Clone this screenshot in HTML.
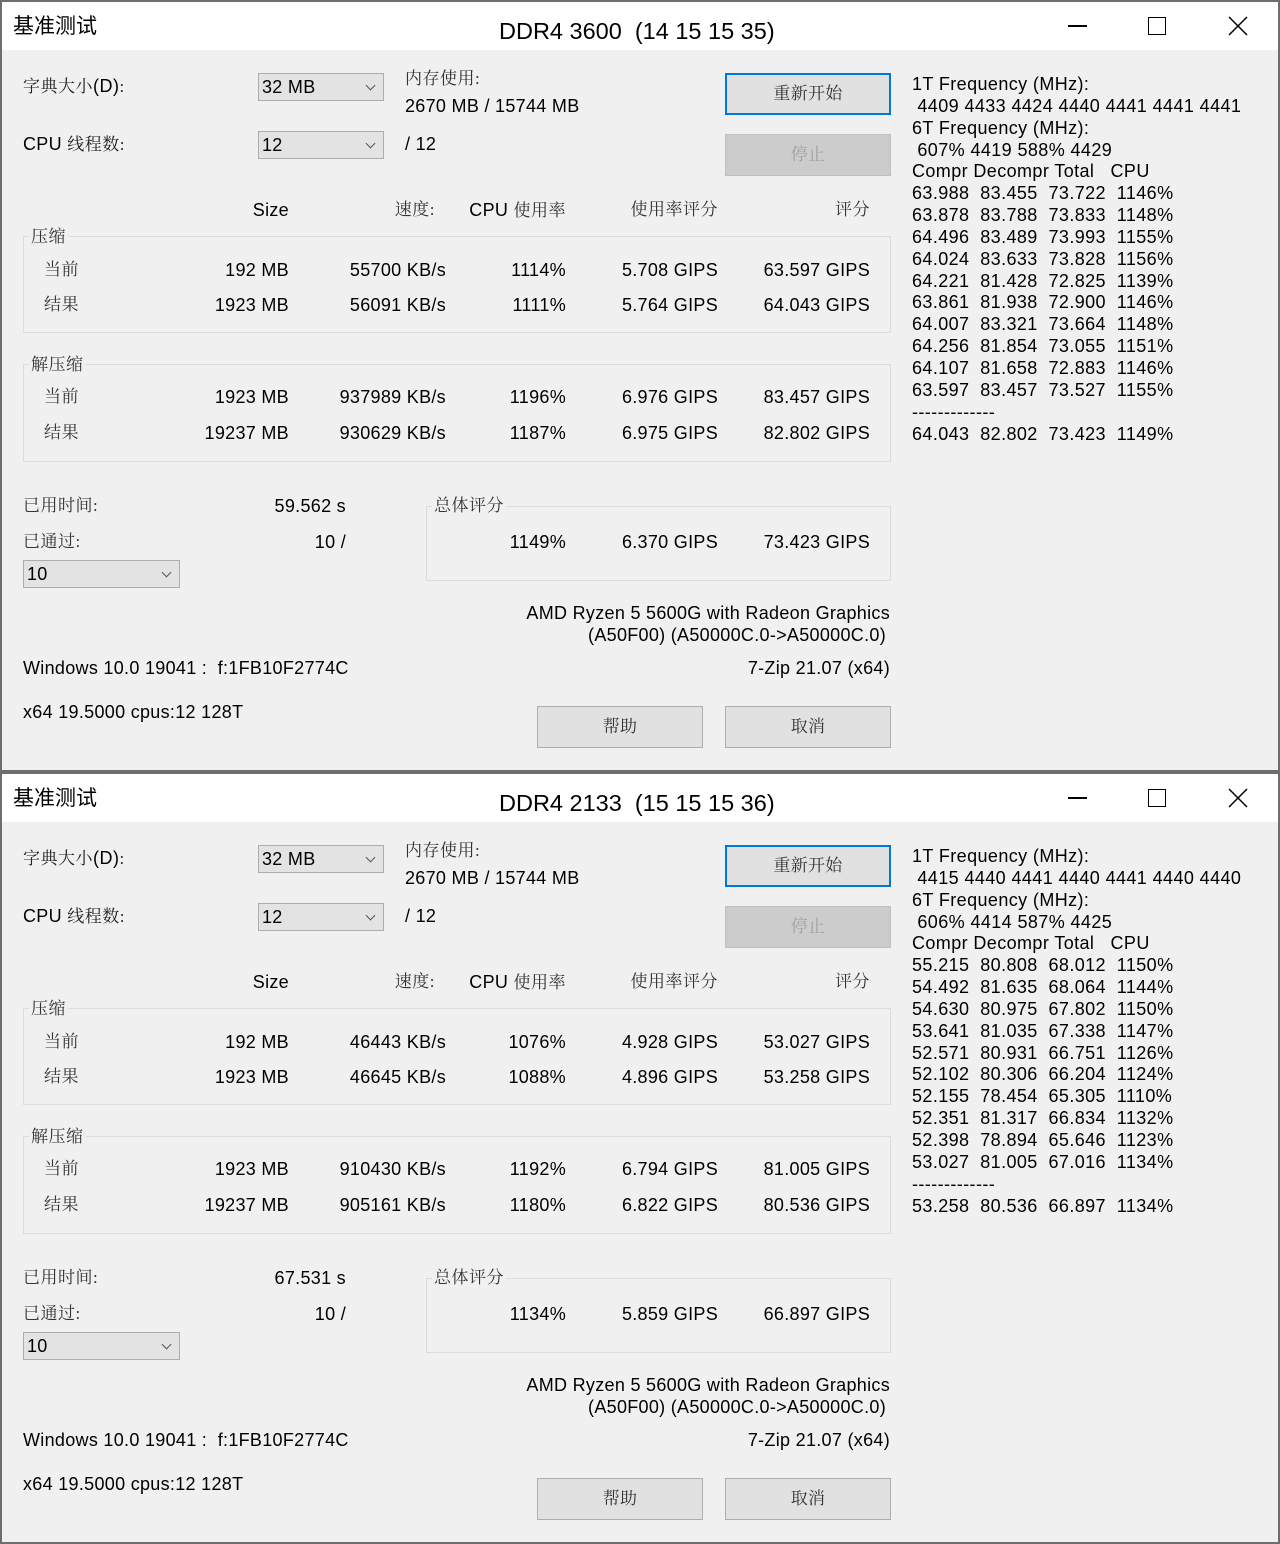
<!DOCTYPE html>
<html><head><meta charset="utf-8"><style>
*{margin:0;padding:0;box-sizing:border-box}
body{width:1280px;height:1544px;background:#f0f0f0;font-family:"Liberation Sans","Noto Sans CJK SC",sans-serif;font-size:18px;color:#000;position:relative;overflow:hidden;letter-spacing:0.3px}
.w{position:absolute;left:0;width:1280px;height:772px;border:2px solid #6e6e6e;background:#f0f0f0}
.tb{position:absolute;left:0;top:0;width:1276px;height:48px;background:#fff}
.t{position:absolute;line-height:22px;white-space:nowrap}
.r{text-align:right}
.cn{font-family:"Liberation Serif","Noto Serif CJK SC",serif;font-size:17px;color:#333;letter-spacing:0.5px}
.cb{position:absolute;height:28px;border:1px solid #adadad;background:#e3e3e3;line-height:26px;padding-left:3px}
.cb i{position:absolute;right:9px;top:8px;width:7px;height:7px;border-right:1.3px solid #555;border-bottom:1.3px solid #555;transform:rotate(45deg)}
.g{position:absolute;border:1px solid #dcdcdc}
.gl{position:absolute;background:#f0f0f0;padding:0 2px;line-height:22px;font-family:"Liberation Serif","Noto Serif CJK SC",serif;font-size:17px;color:#333;letter-spacing:0.5px}
.btn{position:absolute;width:166px;height:42px;border:1px solid #adadad;background:#e1e1e1;text-align:center;line-height:40px;font-family:"Liberation Serif","Noto Serif CJK SC",serif;font-size:17px;color:#333}
.pre{position:absolute;left:910px;top:72px;white-space:pre;line-height:21.85px;letter-spacing:0.4px}
.ttl{position:absolute;left:497px;top:15px;font-size:23.5px;line-height:28px;white-space:nowrap;letter-spacing:0}
.cap{position:absolute;left:11px;top:12px;font-size:21px;line-height:26px;letter-spacing:0}
</style></head><body>

<div class="w" style="top:0">
<div class="tb"></div>
<div class="cap">基准测试</div>
<div class="ttl">DDR4 3600&nbsp; (14 15 15 35)</div>
<div style="position:absolute;left:1066px;top:23px;width:19px;height:1.5px;background:#000"></div>
<div style="position:absolute;left:1146px;top:15px;width:18px;height:18px;border:1.5px solid #000"></div>
<svg style="position:absolute;left:1226px;top:14px" width="20" height="20"><path d="M1 1L19 19M19 1L1 19" stroke="#000" stroke-width="1.5"/></svg>

<div class="t cn" style="left:21px;top:73px;color:#222">字典大小<span style="font-family:'Liberation Sans',sans-serif;font-size:18px;color:#000">(D)</span>:</div>
<div class="cb" style="left:256px;top:71px;width:126px">32 MB<i></i></div>
<div class="t cn" style="left:403px;top:66px">内存使用:</div>
<div class="t" style="left:403px;top:93px">2670 MB / 15744 MB</div>
<div class="t" style="left:21px;top:131px">CPU <span class="cn" style="color:#222">线程数:</span></div>
<div class="cb" style="left:256px;top:129px;width:126px">12<i></i></div>
<div class="t" style="left:403px;top:131px">/ 12</div>
<div class="btn" style="left:723px;top:71px;border:2px solid #0078d7;line-height:38px">重新开始</div>
<div class="btn" style="left:723px;top:132px;background:#cccccc;border-color:#bfbfbf;color:#a0a0a0">停止</div>

<div class="t r" style="right:989px;top:197px">Size</div>
<div class="t r cn" style="right:843px;top:197px">速度:</div>
<div class="t r" style="right:712px;top:197px">CPU <span class="cn">使用率</span></div>
<div class="t r cn" style="right:560px;top:197px">使用率评分</div>
<div class="t r cn" style="right:408px;top:197px">评分</div>

<div class="g" style="left:21px;top:234px;width:868px;height:97px"></div>
<div class="gl" style="left:27px;top:224px">压缩</div>
<div class="t cn" style="left:42px;top:257px">当前</div><div class="t cn" style="left:42px;top:292px">结果</div>
<div class="t r" style="right:989px;top:257px">192 MB</div><div class="t r" style="right:832px;top:257px">55700 KB/s</div><div class="t r" style="right:712px;top:257px">1114%</div><div class="t r" style="right:560px;top:257px">5.708 GIPS</div><div class="t r" style="right:408px;top:257px">63.597 GIPS</div>
<div class="t r" style="right:989px;top:292px">1923 MB</div><div class="t r" style="right:832px;top:292px">56091 KB/s</div><div class="t r" style="right:712px;top:292px">1111%</div><div class="t r" style="right:560px;top:292px">5.764 GIPS</div><div class="t r" style="right:408px;top:292px">64.043 GIPS</div>

<div class="g" style="left:21px;top:362px;width:868px;height:98px"></div>
<div class="gl" style="left:27px;top:352px">解压缩</div>
<div class="t cn" style="left:42px;top:384px">当前</div><div class="t cn" style="left:42px;top:420px">结果</div>
<div class="t r" style="right:989px;top:384px">1923 MB</div><div class="t r" style="right:832px;top:384px">937989 KB/s</div><div class="t r" style="right:712px;top:384px">1196%</div><div class="t r" style="right:560px;top:384px">6.976 GIPS</div><div class="t r" style="right:408px;top:384px">83.457 GIPS</div>
<div class="t r" style="right:989px;top:420px">19237 MB</div><div class="t r" style="right:832px;top:420px">930629 KB/s</div><div class="t r" style="right:712px;top:420px">1187%</div><div class="t r" style="right:560px;top:420px">6.975 GIPS</div><div class="t r" style="right:408px;top:420px">82.802 GIPS</div>

<div class="t cn" style="left:21px;top:493px">已用时间:</div>
<div class="t r" style="right:932px;top:493px">59.562 s</div>
<div class="t cn" style="left:21px;top:529px">已通过:</div>
<div class="t r" style="right:932px;top:529px">10 /</div>
<div class="cb" style="left:21px;top:558px;width:157px">10<i></i></div>

<div class="g" style="left:424px;top:504px;width:465px;height:75px"></div>
<div class="gl" style="left:430px;top:493px">总体评分</div>
<div class="t r" style="right:712px;top:529px">1149%</div><div class="t r" style="right:560px;top:529px">6.370 GIPS</div><div class="t r" style="right:408px;top:529px">73.423 GIPS</div>

<div class="t r" style="right:388px;top:600px">AMD Ryzen 5 5600G with Radeon Graphics</div>
<div class="t r" style="right:392px;top:622px">(A50F00) (A50000C.0-&gt;A50000C.0)</div>
<div class="t r" style="right:388px;top:655px">7-Zip 21.07 (x64)</div>
<div class="t" style="left:21px;top:655px">Windows 10.0 19041 :&nbsp; f:1FB10F2774C</div>
<div class="t" style="left:21px;top:699px">x64 19.5000 cpus:12 128T</div>
<div class="btn" style="left:535px;top:704px">帮助</div>
<div class="btn" style="left:723px;top:704px">取消</div>

<div class="pre">1T Frequency (MHz):
 4409 4433 4424 4440 4441 4441 4441
6T Frequency (MHz):
 607% 4419 588% 4429
Compr Decompr Total   CPU
63.988  83.455  73.722  1146%
63.878  83.788  73.833  1148%
64.496  83.489  73.993  1155%
64.024  83.633  73.828  1156%
64.221  81.428  72.825  1139%
63.861  81.938  72.900  1146%
64.007  83.321  73.664  1148%
64.256  81.854  73.055  1151%
64.107  81.658  72.883  1146%
63.597  83.457  73.527  1155%
-------------
64.043  82.802  73.423  1149%</div>
</div>

<div class="w" style="top:772px;height:772px">
<div class="tb"></div>
<div class="cap">基准测试</div>
<div class="ttl">DDR4 2133&nbsp; (15 15 15 36)</div>
<div style="position:absolute;left:1066px;top:23px;width:19px;height:1.5px;background:#000"></div>
<div style="position:absolute;left:1146px;top:15px;width:18px;height:18px;border:1.5px solid #000"></div>
<svg style="position:absolute;left:1226px;top:14px" width="20" height="20"><path d="M1 1L19 19M19 1L1 19" stroke="#000" stroke-width="1.5"/></svg>

<div class="t cn" style="left:21px;top:73px;color:#222">字典大小<span style="font-family:'Liberation Sans',sans-serif;font-size:18px;color:#000">(D)</span>:</div>
<div class="cb" style="left:256px;top:71px;width:126px">32 MB<i></i></div>
<div class="t cn" style="left:403px;top:66px">内存使用:</div>
<div class="t" style="left:403px;top:93px">2670 MB / 15744 MB</div>
<div class="t" style="left:21px;top:131px">CPU <span class="cn" style="color:#222">线程数:</span></div>
<div class="cb" style="left:256px;top:129px;width:126px">12<i></i></div>
<div class="t" style="left:403px;top:131px">/ 12</div>
<div class="btn" style="left:723px;top:71px;border:2px solid #0078d7;line-height:38px">重新开始</div>
<div class="btn" style="left:723px;top:132px;background:#cccccc;border-color:#bfbfbf;color:#a0a0a0">停止</div>

<div class="t r" style="right:989px;top:197px">Size</div>
<div class="t r cn" style="right:843px;top:197px">速度:</div>
<div class="t r" style="right:712px;top:197px">CPU <span class="cn">使用率</span></div>
<div class="t r cn" style="right:560px;top:197px">使用率评分</div>
<div class="t r cn" style="right:408px;top:197px">评分</div>

<div class="g" style="left:21px;top:234px;width:868px;height:97px"></div>
<div class="gl" style="left:27px;top:224px">压缩</div>
<div class="t cn" style="left:42px;top:257px">当前</div><div class="t cn" style="left:42px;top:292px">结果</div>
<div class="t r" style="right:989px;top:257px">192 MB</div><div class="t r" style="right:832px;top:257px">46443 KB/s</div><div class="t r" style="right:712px;top:257px">1076%</div><div class="t r" style="right:560px;top:257px">4.928 GIPS</div><div class="t r" style="right:408px;top:257px">53.027 GIPS</div>
<div class="t r" style="right:989px;top:292px">1923 MB</div><div class="t r" style="right:832px;top:292px">46645 KB/s</div><div class="t r" style="right:712px;top:292px">1088%</div><div class="t r" style="right:560px;top:292px">4.896 GIPS</div><div class="t r" style="right:408px;top:292px">53.258 GIPS</div>

<div class="g" style="left:21px;top:362px;width:868px;height:98px"></div>
<div class="gl" style="left:27px;top:352px">解压缩</div>
<div class="t cn" style="left:42px;top:384px">当前</div><div class="t cn" style="left:42px;top:420px">结果</div>
<div class="t r" style="right:989px;top:384px">1923 MB</div><div class="t r" style="right:832px;top:384px">910430 KB/s</div><div class="t r" style="right:712px;top:384px">1192%</div><div class="t r" style="right:560px;top:384px">6.794 GIPS</div><div class="t r" style="right:408px;top:384px">81.005 GIPS</div>
<div class="t r" style="right:989px;top:420px">19237 MB</div><div class="t r" style="right:832px;top:420px">905161 KB/s</div><div class="t r" style="right:712px;top:420px">1180%</div><div class="t r" style="right:560px;top:420px">6.822 GIPS</div><div class="t r" style="right:408px;top:420px">80.536 GIPS</div>

<div class="t cn" style="left:21px;top:493px">已用时间:</div>
<div class="t r" style="right:932px;top:493px">67.531 s</div>
<div class="t cn" style="left:21px;top:529px">已通过:</div>
<div class="t r" style="right:932px;top:529px">10 /</div>
<div class="cb" style="left:21px;top:558px;width:157px">10<i></i></div>

<div class="g" style="left:424px;top:504px;width:465px;height:75px"></div>
<div class="gl" style="left:430px;top:493px">总体评分</div>
<div class="t r" style="right:712px;top:529px">1134%</div><div class="t r" style="right:560px;top:529px">5.859 GIPS</div><div class="t r" style="right:408px;top:529px">66.897 GIPS</div>

<div class="t r" style="right:388px;top:600px">AMD Ryzen 5 5600G with Radeon Graphics</div>
<div class="t r" style="right:392px;top:622px">(A50F00) (A50000C.0-&gt;A50000C.0)</div>
<div class="t r" style="right:388px;top:655px">7-Zip 21.07 (x64)</div>
<div class="t" style="left:21px;top:655px">Windows 10.0 19041 :&nbsp; f:1FB10F2774C</div>
<div class="t" style="left:21px;top:699px">x64 19.5000 cpus:12 128T</div>
<div class="btn" style="left:535px;top:704px">帮助</div>
<div class="btn" style="left:723px;top:704px">取消</div>

<div class="pre">1T Frequency (MHz):
 4415 4440 4441 4440 4441 4440 4440
6T Frequency (MHz):
 606% 4414 587% 4425
Compr Decompr Total   CPU
55.215  80.808  68.012  1150%
54.492  81.635  68.064  1144%
54.630  80.975  67.802  1150%
53.641  81.035  67.338  1147%
52.571  80.931  66.751  1126%
52.102  80.306  66.204  1124%
52.155  78.454  65.305  1110%
52.351  81.317  66.834  1132%
52.398  78.894  65.646  1123%
53.027  81.005  67.016  1134%
-------------
53.258  80.536  66.897  1134%</div>
</div>

</body></html>
